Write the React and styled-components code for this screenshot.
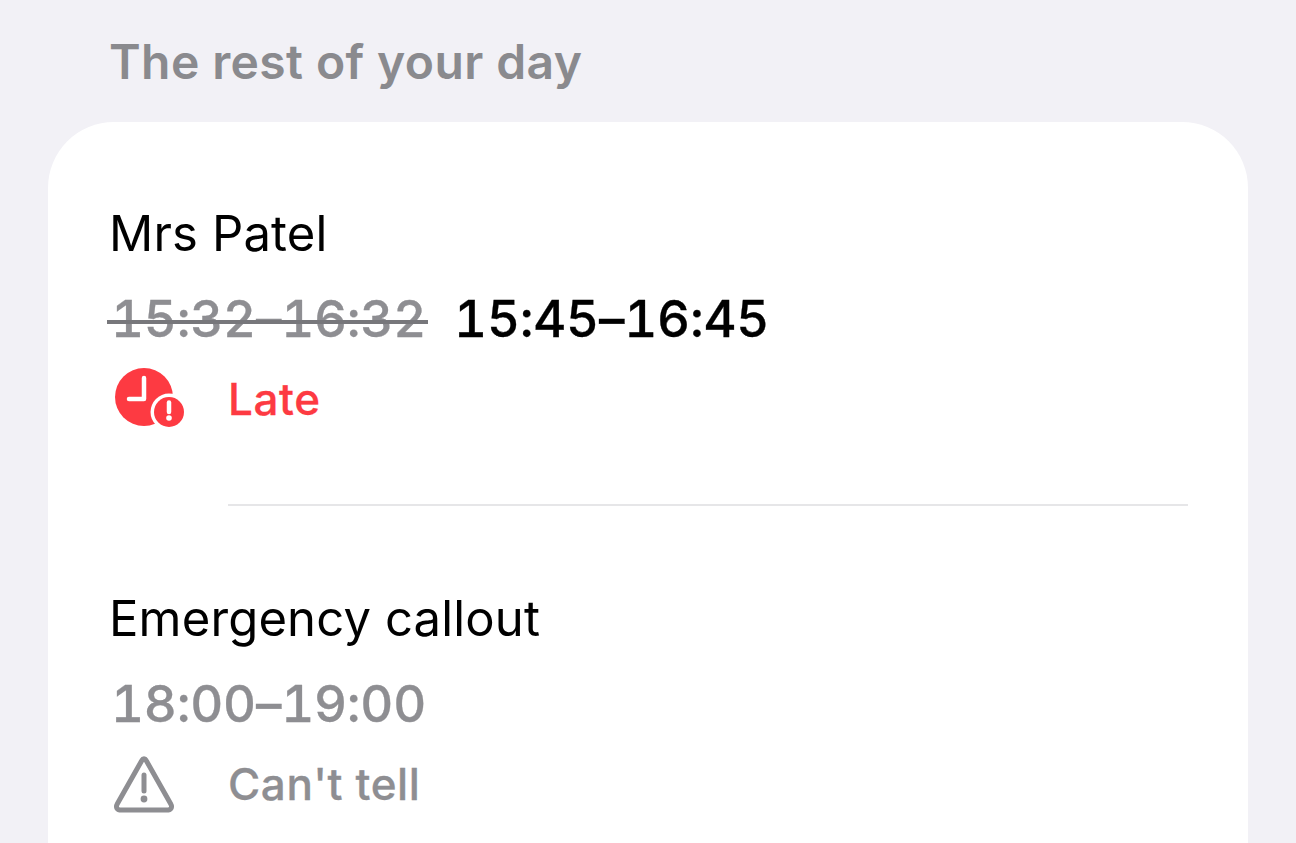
import React from "react";
import styled, { createGlobalStyle } from "styled-components";

const Global = createGlobalStyle`
  html, body {
    margin: 0;
    height: 843px;
    overflow: hidden;
    background: #f2f1f6;
    font-family: Inter, "Liberation Sans", sans-serif;
  }
`;

const Page = styled.div`
  padding: 34px 48px 0;
  height: 809px;
  overflow: hidden;
`;

const SectionTitle = styled.h2`
  margin: 0 0 32px 61px;
  font-size: 48px;
  line-height: 56px;
  font-weight: 600;
  letter-spacing: 0.4px;
  color: #8a8a8e;
`;

const Card = styled.div`
  background: #fff;
  border-radius: 66px 66px 0 0;
  padding: 84px 60px 0 61px;
  height: 721px;
`;

const Visit = styled.div`
  padding-bottom: ${(p) => (p.$last ? 0 : "75px")};
`;

const Name = styled.div`
  font-size: 49px;
  line-height: 56px;
  letter-spacing: 0.15px;
  color: #000;
`;

const Times = styled.div`
  display: flex;
  gap: 28px;
  margin: 29px 0 0 2px;
  font-size: 51px;
  line-height: 56px;
  font-weight: 500;
  letter-spacing: -0.2px;
  font-variant-numeric: tabular-nums;
  -webkit-text-stroke: 0.3px currentColor;
`;

const Time = styled.span`
  position: relative;
  color: ${(p) => (p.$muted ? "#8e8e92" : "#000")};
`;

const Strike = styled.span`
  position: absolute;
  left: -4px;
  right: -2px;
  top: 29px;
  height: 4px;
  background: #77777b;
`;

const Status = styled.div`
  display: flex;
  align-items: center;
  margin-top: 22px;
  height: 60px;
  font-size: 44px;
  font-weight: 500;
  letter-spacing: 0.6px;
  -webkit-text-stroke: 0.3px currentColor;
  color: ${(p) => p.$color};
`;

const IconSlot = styled.span`
  display: flex;
  width: 119px;
  flex: none;
`;

const Divider = styled.div`
  height: 2px;
  margin: 0 0 85px 119px;
  background: #e6e6e8;
`;

const LateIcon = () => (
  <svg width="80" height="64" viewBox="0 0 80 64" fill="none">
    <circle cx="35" cy="30" r="29" fill="#fd3a42" />
    <path d="M35 11V32H20" stroke="#fff" strokeWidth="4.5" strokeLinecap="round" strokeLinejoin="round" />
    <circle cx="60" cy="45" r="18.5" fill="#fff" />
    <circle cx="60" cy="45" r="15" fill="#fd3a42" />
    <path d="M60 35.5V45" stroke="#fff" strokeWidth="4.5" strokeLinecap="round" />
    <circle cx="60" cy="51" r="2.8" fill="#fff" />
  </svg>
);

const WarningIcon = () => (
  <svg width="76" height="60" viewBox="0 0 76 60" fill="none">
    <path
      d="M32.8 6.5 8.5 49.5C6.2 53.6 8 56 12.5 56H57.5C62 56 63.8 53.6 61.5 49.5L37.2 6.5C36 4.2 34 4.2 32.8 6.5Z"
      stroke="#8e8e92"
      strokeWidth="5"
      strokeLinejoin="round"
    />
    <path d="M35 21V37" stroke="#8e8e92" strokeWidth="5" strokeLinecap="round" />
    <circle cx="35" cy="45" r="3.4" fill="#8e8e92" />
  </svg>
);

export default function App() {
  return (
    <Page>
      <Global />
      <SectionTitle>The rest of your day</SectionTitle>
      <Card>
        <Visit>
          <Name>Mrs Patel</Name>
          <Times>
            <Time $muted>15:32–16:32<Strike /></Time>
            <Time>15:45–16:45</Time>
          </Times>
          <Status $color="#fd3a42">
            <IconSlot><LateIcon /></IconSlot>
            Late
          </Status>
        </Visit>
        <Divider />
        <Visit $last>
          <Name>Emergency callout</Name>
          <Times>
            <Time $muted>18:00–19:00</Time>
          </Times>
          <Status $color="#8e8e92">
            <IconSlot><WarningIcon /></IconSlot>
            Can't tell
          </Status>
        </Visit>
      </Card>
    </Page>
  );
}
